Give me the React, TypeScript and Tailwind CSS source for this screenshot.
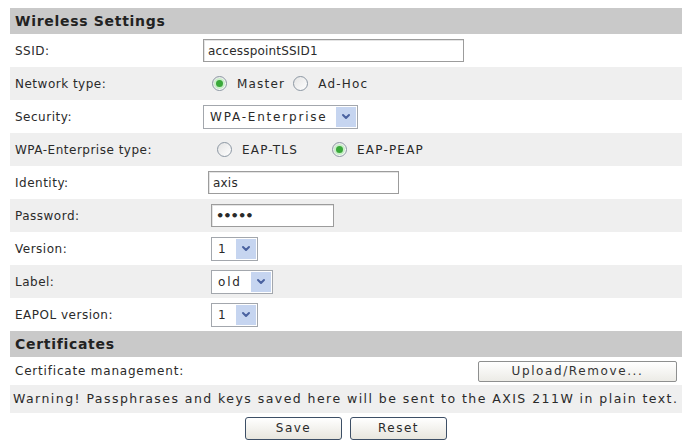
import React from 'react';

function Chevron() {
  return (
    <svg width="10" height="8" viewBox="0 0 10 8" fill="none">
      <path d="M2 2l3 3 3-3" stroke="#4a62a0" strokeWidth="2" strokeLinecap="round" strokeLinejoin="round" />
    </svg>
  );
}

function TextBox({ width, value, dots }: { width: string; value: string; dots?: boolean }) {
  return (
    <div className={`${width} flex h-[23px] items-center border border-[#9c9c9c] bg-white px-[4px] text-[12px] tracking-[0.2px] shadow-[inset_1px_1px_0_#e4e4e4]`}>
      <span className={dots ? 'text-[13px] font-bold leading-none tracking-[-1px]' : ''}>{value}</span>
    </div>
  );
}

function Select({ width, value }: { width: string; value: string }) {
  return (
    <div className={`${width} flex h-[24px] items-stretch justify-between border border-[#a3a7ad] bg-white p-[1px] text-[12px]`}>
      <span className="flex items-center pl-[5px] tracking-[1.8px]">{value}</span>
      <span className="flex w-[20px] items-center justify-center bg-[#c6d5f0]">
        <Chevron />
      </span>
    </div>
  );
}

function Radio({ checked, label }: { checked?: boolean; label: string }) {
  return (
    <span className="flex items-center gap-[10px]">
      <span className="flex h-[15px] w-[15px] items-center justify-center rounded-full border border-[#8c97a3] bg-gradient-to-br from-[#e4e4e4] to-white">
        {checked && <span className="h-[7px] w-[7px] rounded-full bg-[#3aa83a] shadow-[0_0_0_2px_#c9eec9]" />}
      </span>
      <span className="text-[12px] tracking-[1.2px]">{label}</span>
    </span>
  );
}

function Row({ label, shaded, children }: { label: string; shaded?: boolean; children: React.ReactNode }) {
  return (
    <div className={`flex h-[33px] items-center ${shaded ? 'bg-[#efefef]' : 'bg-white'}`}>
      <div className="w-[193px] pl-[5px]">{label}</div>
      <div className="flex flex-1 items-center">{children}</div>
    </div>
  );
}

function SectionHeader({ title }: { title: string }) {
  return (
    <div className="flex h-[26px] items-center bg-[#c9c9c9] pl-[5px] text-[14px] font-bold tracking-[0.7px] text-[#222]">
      {title}
    </div>
  );
}

export default function App() {
  return (
    <div className="h-[448px] w-[684px] overflow-hidden bg-white pt-[8px] pl-[10px] pr-[2px] font-['DejaVu_Sans',Verdana,sans-serif] text-[12px] tracking-[0.5px] text-[#2a2a2a]">
      <SectionHeader title="Wireless Settings" />

      <Row label="SSID:">
        <TextBox width="w-[261px]" value="accesspointSSID1" />
      </Row>
      <Row label="Network type:" shaded>
        <div className="flex items-center gap-[8px] pl-[9px]">
          <Radio checked label="Master" />
          <Radio label="Ad-Hoc" />
        </div>
      </Row>
      <Row label="Security:">
        <Select width="w-[155px]" value="WPA-Enterprise" />
      </Row>
      <Row label="WPA-Enterprise type:" shaded>
        <div className="flex items-center gap-[34px] pl-[14px]">
          <Radio label="EAP-TLS" />
          <Radio checked label="EAP-PEAP" />
        </div>
      </Row>
      <Row label="Identity:">
        <div className="pl-[5px]">
          <TextBox width="w-[191px]" value="axis" />
        </div>
      </Row>
      <Row label="Password:" shaded>
        <div className="pl-[8px]">
          <TextBox width="w-[123px]" value="•••••" dots />
        </div>
      </Row>
      <Row label="Version:">
        <div className="pl-[8px]">
          <Select width="w-[47px]" value="1" />
        </div>
      </Row>
      <Row label="Label:" shaded>
        <div className="pl-[8px]">
          <Select width="w-[62px]" value="old" />
        </div>
      </Row>
      <Row label="EAPOL version:">
        <div className="pl-[8px]">
          <Select width="w-[47px]" value="1" />
        </div>
      </Row>

      <SectionHeader title="Certificates" />

      <div className="flex h-[28px] items-center justify-between bg-white pl-[5px] pr-[5px]">
        <span className="tracking-[0.8px]">Certificate management:</span>
        <button className="h-[21px] w-[199px] rounded-[2px] border border-[#8e8f8f] bg-gradient-to-b from-white to-[#ecebe6] text-[12px] tracking-[1.6px] text-[#333]">
          Upload/Remove...
        </button>
      </div>
      <div className="flex h-[28px] items-center bg-[#efefef] pl-[3px] text-[12.5px] tracking-[1.45px] whitespace-nowrap">
        Warning! Passphrases and keys saved here will be sent to the AXIS 211W in plain text.
      </div>
      <div className="flex h-[30px] items-center justify-center gap-[8px]">
        <button className="h-[23px] w-[97px] rounded-[3px] border border-[#3d4f66] bg-gradient-to-b from-white to-[#e8e6de] text-[12px] tracking-[1.5px]">
          Save
        </button>
        <button className="h-[23px] w-[97px] rounded-[3px] border border-[#3d4f66] bg-gradient-to-b from-white to-[#e8e6de] text-[12px] tracking-[1.5px]">
          Reset
        </button>
      </div>
    </div>
  );
}
